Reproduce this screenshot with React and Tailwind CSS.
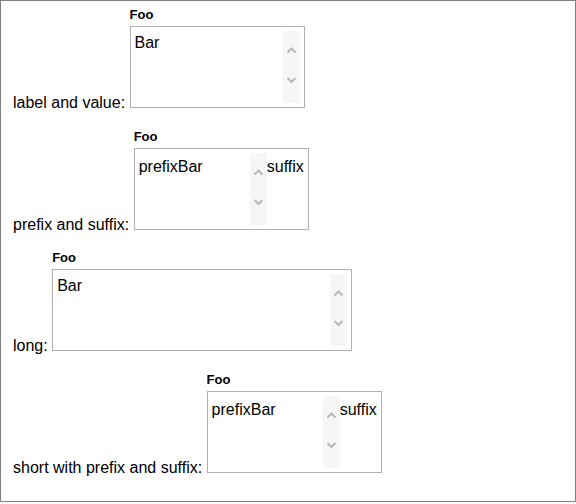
function ScrollStrip() {
  return (
    <span className="block h-[72px] w-[17px] shrink-0 bg-[#f6f6f6]">
      <svg width="17" height="72" viewBox="0 0 17 72" className="block">
        <polyline points="4.5,21.5 8.5,17.5 12.5,21.5" fill="none" stroke="#b8b8b8" strokeWidth="2" />
        <polyline points="4.5,47 8.5,51 12.5,47" fill="none" stroke="#b8b8b8" strokeWidth="2" />
      </svg>
    </span>
  );
}

function Field({ label, width, prefix, suffix }) {
  const hasAffix = prefix || suffix;
  return (
    <div className="mb-[13.5px]">
      {label}{' '}
      <span className="inline-block overflow-hidden align-baseline">
        <span className="mb-1 block text-[13px] font-bold leading-[15px]">Foo</span>
        <span className="flex h-[82px] border border-[#b0b0b0] p-1">
          {prefix && <span className="shrink-0 whitespace-nowrap pt-[2px]">{prefix}</span>}
          <span className="flex shrink-0" style={{ width }}>
            <span className={`flex-1 ${hasAffix ? 'pt-[2px]' : ''}`}>Bar</span>
            <ScrollStrip />
          </span>
          {suffix && <span className="shrink-0 whitespace-nowrap pt-[2px]">{suffix}</span>}
        </span>
      </span>
    </div>
  );
}

export default function App() {
  return (
    <div className="h-[502px] w-[576px] border border-[#808080] pl-[12px] pt-[6px] font-['Liberation_Sans',Arial,sans-serif] text-base text-black">
      <Field label="label and value:" width={165} />
      <Field label="prefix and suffix:" width={89} prefix="prefix" suffix="suffix" />
      <Field label="long:" width={290} />
      <Field label="short with prefix and suffix:" width={89} prefix="prefix" suffix="suffix" />
    </div>
  );
}
